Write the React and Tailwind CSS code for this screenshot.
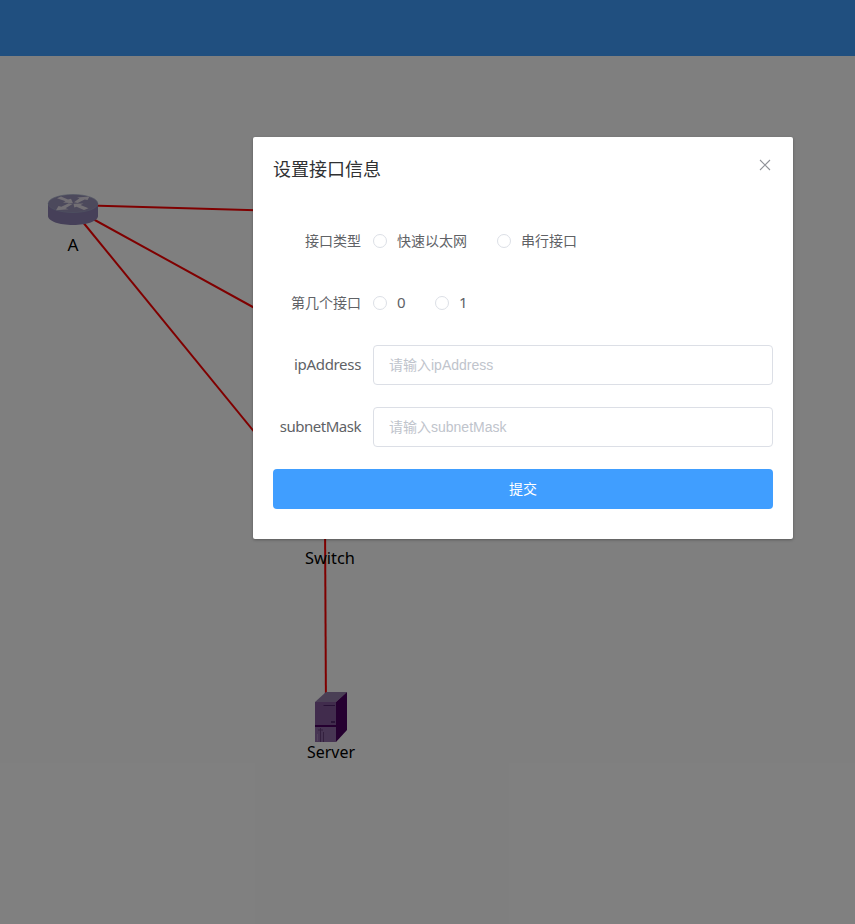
import React from "react";

const RADIO = "h-3.5 w-3.5 shrink-0 rounded-full border border-[#dcdfe6] bg-white";

function Radio({ children, className = "", textClass = "" }) {
  return (
    <label className={`flex items-center gap-2.5 ${className}`}>
      <span className={RADIO} />
      <span className={textClass}>{children}</span>
    </label>
  );
}

function Field({ label, labelClass = "", children }) {
  return (
    <div className="flex h-10 items-center">
      <div className={`w-[100px] shrink-0 whitespace-nowrap pr-3 text-right ${labelClass}`}>{label}</div>
      {children}
    </div>
  );
}

function Topology() {
  return (
    <svg className="block h-[868px] w-[855px]" viewBox="0 56 855 868">
      <g stroke="#ff0000" strokeWidth="2" fill="none">
        <path d="M73 205L330 212.500" />
        <path d="M73 208L330 349.500" />
        <path d="M73 210L325 518.500" />
        <path d="M325 519L326 716" />
      </g>
      <g>
        <path d="M48 203v13c0 5 11 9 25 9s25-4 25-9v-13z" fill="#8c80b2" />
        <ellipse cx="73" cy="203.500" rx="24.800" ry="9" fill="#9992b8" stroke="#9fa9c6" strokeWidth=".6" />
        <g fill="#e5dfe9">
          <path d="M57 198.200l4-1.700 7 3 3-.7 2 4.400-10-.7 2.600-1.200z" />
          <path d="M74 202.300l5.500-4-2.500-.8 12.500-.9-2 3.400-2.800-.6-7 3.600z" />
          <path d="M72.500 204l-7 4.300 3 .9-12.500 1 2.500-4.200 2.800.8 7.500-3.600z" />
          <path d="M73.500 203.800l10-.2-3 1.500 8 3.100-4.500 1.700-7.500-3.200-2.200.8z" />
        </g>
      </g>
      <g>
        <path d="M315 702l11-10h21l-11 10z" fill="#947eab" />
        <path d="M336 702l11-10v38l-11 12z" fill="#4b0060" />
        <path d="M315 702h21v40h-21z" fill="#83589a" />
        <path d="M315 725h21v2h-21z" fill="#4b0060" />
        <path d="M315 727h21v15h-21z" fill="#8e6aa7" />
        <path d="M323.500 705.500H335" stroke="#51256d" strokeWidth="1" />
        <path d="M331 722h4" stroke="#51256d" strokeWidth="1.800" />
        <path d="M318 730h5M320.500 728v14M323.500 732v10" stroke="#66417d" strokeWidth="1" />
        <path d="M317.500 734v7" stroke="#a584b8" strokeWidth="1" />
      </g>
      <g fill="#000" fontFamily="Noto Sans" fontSize="16" textAnchor="middle">
        <text x="73" y="251" textLength="11" lengthAdjust="spacingAndGlyphs">A</text>
        <text x="330" y="564" textLength="50" lengthAdjust="spacingAndGlyphs">Switch</text>
        <text x="331" y="758" textLength="48" lengthAdjust="spacingAndGlyphs">Server</text>
      </g>
    </svg>
  );
}

export default function App() {
  return (
    <div className="relative h-[924px] w-[855px] overflow-hidden bg-white font-['Noto_Sans','Noto_Sans_CJK_SC',sans-serif]">
      <header className="h-14 bg-[#409eff]" />
      <Topology />
      <div className="absolute inset-0 bg-black/50 pl-[253px] pt-[137px]">
        <section className="h-[402px] w-[540px] rounded-[2px] bg-white shadow-[0_1px_3px_rgba(0,0,0,0.3)]">
          <div className="flex h-[54px] items-start justify-between px-5 pt-5">
            <h2 className="text-[18px] leading-6 text-[#303133]">设置接口信息</h2>
            <button aria-label="close" className="mr-0.5 mt-[2px]">
              <svg className="h-3 w-3" viewBox="0 0 12 12" stroke="#909399" strokeWidth="1.100" fill="none">
                <path d="M1 1l10 10M11 1L1 11" />
              </svg>
            </button>
          </div>
          <form className="flex flex-col gap-[22px] px-5 py-[30px] text-[14px] leading-10 text-[#606266]">
            <Field label="接口类型">
              <Radio>快速以太网</Radio>
              <Radio className="ml-[30px]">串行接口</Radio>
            </Field>
            <Field label="第几个接口">
              <Radio textClass="w-2 pb-0.5 text-[15px]">0</Radio>
              <Radio className="ml-[30px]" textClass="w-2 pb-0.5 text-[15px]">1</Radio>
            </Field>
            <Field label="ipAddress" labelClass="pb-0.5 text-[15px] tracking-[-0.32px]">
              <input
                placeholder="请输入ipAddress"
                className="h-10 w-[400px] rounded border border-[#dcdfe6] px-[15px] font-['Liberation_Sans','Noto_Sans_CJK_SC',sans-serif] text-[14px] placeholder:text-[#c0c4cc]"
              />
            </Field>
            <Field label="subnetMask" labelClass="pb-0.5 text-[15px] tracking-[-0.48px]">
              <input
                placeholder="请输入subnetMask"
                className="h-10 w-[400px] rounded border border-[#dcdfe6] px-[15px] font-['Liberation_Sans','Noto_Sans_CJK_SC',sans-serif] text-[14px] placeholder:text-[#c0c4cc]"
              />
            </Field>
            <button type="button" className="h-10 rounded bg-[#409eff] text-[14px] leading-10 text-white">
              提交
            </button>
          </form>
        </section>
      </div>
    </div>
  );
}
